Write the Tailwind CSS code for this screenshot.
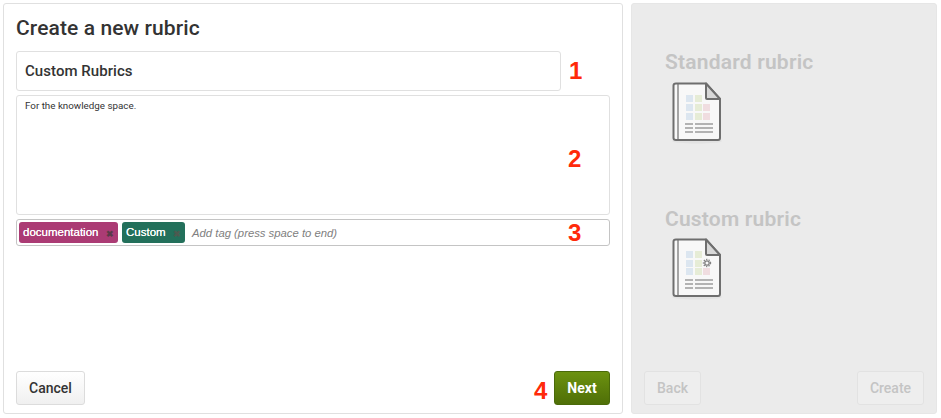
<!DOCTYPE html>
<html><head><meta charset="utf-8">
<script src="https://cdn.jsdelivr.net/npm/@tailwindcss/browser@4"></script>
</head>
<body class="bg-white">
<div class="relative flex w-[941px] h-[418px] gap-[8px] pt-[3px] pl-[3px] font-['Roboto',sans-serif] text-[#333] overflow-hidden">
  <section class="w-[620px] h-[411px] border border-[#e0e0e0] rounded-[3px] bg-white px-[12px] flex flex-col">
    <h1 class="text-[21px] leading-[28px] font-medium mt-[10px] mb-[9px] tracking-[0.1px]">Create a new rubric</h1>
    <div class="w-[545px] h-[40px] shrink-0 border border-[#e0e0e0] rounded-[3px] px-[8px] flex items-center text-[15px] font-medium tracking-[0.05px]">Custom Rubrics</div>
    <div class="w-[594px] h-[120px] shrink-0 mt-[4px] border border-[#e0e0e0] rounded-[3px] px-[8px] pt-[3px] text-[9.8px] leading-[14px]">For the knowledge space.</div>
    <div class="w-[594px] h-[27px] shrink-0 mt-[4px] border border-[#c4c4c4] rounded-[3px] pl-[2px] flex items-center font-['Liberation_Sans',sans-serif] text-[11.5px]">
      <span class="h-[21px] w-[99px] rounded-[3px] bg-[#ab3b74] text-white pl-[4px] pt-[1px] flex items-center justify-between pr-[4px] [text-shadow:0_0_0.4px_#fff]">documentation<span class="text-[#5a3a48] text-[9px] font-bold mt-[3px] [text-shadow:none]">✖</span></span>
      <span class="h-[21px] w-[63px] ml-[4px] rounded-[3px] bg-[#23705b] text-white pl-[4px] pt-[1px] flex items-center justify-between pr-[4px] [text-shadow:0_0_0.4px_#fff]">Custom<span class="text-[#4d5a50] text-[9px] font-bold mt-[3px] [text-shadow:none]">✖</span></span>
      <span class="ml-[7px] mt-[1px] italic text-[#808080] text-[11.3px]">Add tag (press space to end)</span>
    </div>
    <div class="mt-auto mb-[8px] flex justify-between items-center">
      <button class="w-[69px] h-[34px] border border-[#dcdcdc] rounded-[3px] bg-gradient-to-b from-white to-[#f0f0f0] text-[14px] font-medium">Cancel</button>
      <button class="w-[56px] h-[34px] border border-[#4a6a0a] rounded-[3px] bg-gradient-to-b from-[#6c9210] to-[#4f6f08] text-white text-[14px] font-bold">Next</button>
    </div>
  </section>
  <section class="w-[306px] h-[411px] rounded-[3px] bg-[#ebebeb] border border-[#e6e6e6] px-[33px] flex flex-col text-[#c4c4c4]">
    <h2 class="text-[21px] leading-[28px] font-semibold mt-[44px] tracking-[0.2px]">Standard rubric</h2>
    <svg class="mt-[6px] ml-[7px]" width="54" height="62" viewBox="0 0 54 62" fill="none">
      <ellipse cx="25" cy="59" rx="25" ry="2.5" fill="#e2e2e2"/>
      <path d="M1.5 3.5 Q1.5 1.5 4 1.5 H34 L48 17 V56 Q48 58 46 58 H4 Q1.5 58 1.5 56 Z" fill="#f8f8f8" stroke="#6e6e6e" stroke-width="2"/>
      <path d="M6 1.5 V58" stroke="#6e6e6e" stroke-width="1.2"/>
      <path d="M34 1.5 V16 Q34 17 35 17 H48 Z" fill="#d8d8d8" stroke="#6e6e6e" stroke-width="2" stroke-linejoin="round"/>
      <g>
        <rect x="14" y="13" width="7" height="7" fill="#dce6f0"/><rect x="23" y="13" width="7" height="7" fill="#e6ecd6"/>
        <rect x="14" y="22" width="7" height="7" fill="#dce6f0"/><rect x="23" y="22" width="7" height="7" fill="#e6ecd6"/><rect x="31" y="22" width="7" height="7" fill="#f0dde0"/>
        <rect x="14" y="31" width="7" height="7" fill="#dce6f0"/><rect x="23" y="31" width="7" height="7" fill="#e6ecd6"/><rect x="31" y="31" width="7" height="7" fill="#f0dde0"/>
      </g>
      <path d="M13 42 H21 M23 42 H41 M13 46 H21 M23 46 H41 M13 50 H21 M23 50 H41" stroke="#6e6e6e" stroke-width="1.2"/>
    </svg>
    <h2 class="text-[21px] leading-[28px] font-semibold mt-[61px] tracking-[0.2px]">Custom rubric</h2>
    <svg class="mt-[5px] ml-[7px]" width="54" height="62" viewBox="0 0 54 62" fill="none">
      <ellipse cx="25" cy="59" rx="25" ry="2.5" fill="#e2e2e2"/>
      <path d="M1.5 3.5 Q1.5 1.5 4 1.5 H34 L48 17 V56 Q48 58 46 58 H4 Q1.5 58 1.5 56 Z" fill="#f8f8f8" stroke="#6e6e6e" stroke-width="2"/>
      <path d="M6 1.5 V58" stroke="#6e6e6e" stroke-width="1.2"/>
      <path d="M34 1.5 V16 Q34 17 35 17 H48 Z" fill="#d8d8d8" stroke="#6e6e6e" stroke-width="2" stroke-linejoin="round"/>
      <g>
        <rect x="14" y="13" width="7" height="7" fill="#dce6f0"/><rect x="23" y="13" width="7" height="7" fill="#e6ecd6"/>
        <rect x="14" y="22" width="7" height="7" fill="#dce6f0"/><rect x="23" y="22" width="7" height="7" fill="#e6ecd6"/>
        <rect x="14" y="30" width="7" height="7" fill="#dce6f0"/><rect x="23" y="30" width="7" height="7" fill="#e6ecd6"/><rect x="31" y="30" width="7" height="7" fill="#f0dde0"/>
      </g>
      <circle cx="35" cy="25" r="2.2" stroke="#808080" stroke-width="1.3"/>
      <circle cx="35" cy="25" r="3.6" stroke="#808080" stroke-width="1.2" stroke-dasharray="1.3 1.3"/>
      <path d="M13 42 H21 M23 42 H41 M13 46 H21 M23 46 H41 M13 50 H21 M23 50 H41" stroke="#6e6e6e" stroke-width="1.2"/>
    </svg>
    <div class="mt-auto mb-[8px] -mx-[21px] flex justify-between items-center">
      <button class="w-[57px] h-[34px] border border-[#e2e2e2] rounded-[3px] bg-[#eeeeee] text-[14px] font-medium">Back</button>
      <button class="w-[67px] h-[34px] border border-[#e2e2e2] rounded-[3px] bg-[#eeeeee] text-[14px] font-medium">Create</button>
    </div>
  </section>
  <span class="absolute left-[569px] top-[57px] text-[#ff2a0a] font-['Liberation_Sans',sans-serif] font-bold text-[24px] leading-[28px]">1</span>
  <span class="absolute left-[568px] top-[145px] text-[#ff2a0a] font-['Liberation_Sans',sans-serif] font-bold text-[24px] leading-[28px]">2</span>
  <span class="absolute left-[568px] top-[219px] text-[#ff2a0a] font-['Liberation_Sans',sans-serif] font-bold text-[24px] leading-[28px]">3</span>
  <span class="absolute left-[534px] top-[377px] text-[#ff2a0a] font-['Liberation_Sans',sans-serif] font-bold text-[24px] leading-[28px]">4</span>
</div>
</body></html>
